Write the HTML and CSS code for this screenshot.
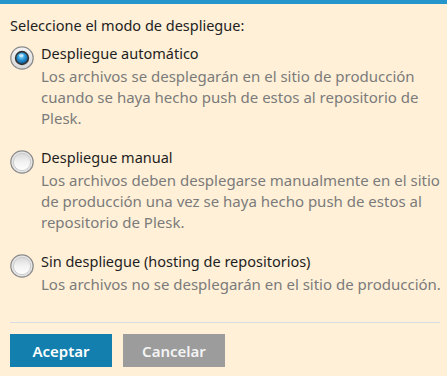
FILE: index.html
```html
<!DOCTYPE html>
<html lang="es">
<head>
<meta charset="utf-8">
<title>Modo de despliegue</title>
<link rel="stylesheet" href="styles.css">
</head>
<body>
<div class="topbar"></div>
<form class="panel">
  <div class="heading">Seleccione el modo de despliegue:</div>
  <div class="options">
    <label class="option">
      <span class="radio">
        <svg width="24" height="24" viewBox="0 0 24 24">
          <defs>
            <linearGradient id="ring" x1="0" y1="0" x2="0" y2="1">
              <stop offset="0" stop-color="#f4f4f4"/>
              <stop offset="1" stop-color="#d8d8d8"/>
            </linearGradient>
            <radialGradient id="blue" cx="0.45" cy="0.35" r="0.7">
              <stop offset="0" stop-color="#9fe0ff"/>
              <stop offset="0.45" stop-color="#2e9bdc"/>
              <stop offset="1" stop-color="#0b4f86"/>
            </radialGradient>
          </defs>
          <circle cx="12" cy="12" r="11.2" fill="url(#ring)" stroke="#8a8a8a" stroke-width="1.2"/>
          <circle cx="12" cy="12" r="7.2" fill="#333"/>
          <circle cx="12" cy="12" r="5.6" fill="url(#blue)"/>
          <ellipse cx="11.3" cy="9.6" rx="2.4" ry="1.4" fill="#d8f3ff" opacity="0.8"/>
        </svg>
      </span>
      <span class="text">
        <span class="label">Despliegue automático</span>
        <span class="desc">Los archivos se desplegarán en el sitio de producción cuando se haya hecho push de estos al repositorio de Plesk.</span>
      </span>
    </label>
    <label class="option">
      <span class="radio">
        <svg width="24" height="24" viewBox="0 0 24 24">
          <defs>
            <linearGradient id="off1" x1="0" y1="0" x2="0" y2="1">
              <stop offset="0" stop-color="#d9d9d9"/>
              <stop offset="0.5" stop-color="#f2f2f2"/>
              <stop offset="1" stop-color="#ffffff"/>
            </linearGradient>
          </defs>
          <circle cx="12" cy="12" r="11.2" fill="#e4e4e4" stroke="#8a8a8a" stroke-width="1.2"/>
          <circle cx="12" cy="12" r="8.6" fill="url(#off1)" stroke="#c4c4c4" stroke-width="0.8"/>
        </svg>
      </span>
      <span class="text">
        <span class="label">Despliegue manual</span>
        <span class="desc">Los archivos deben desplegarse manualmente en el sitio de producción una vez se haya hecho push de estos al repositorio de Plesk.</span>
      </span>
    </label>
    <label class="option">
      <span class="radio">
        <svg width="24" height="24" viewBox="0 0 24 24">
          <circle cx="12" cy="12" r="11.2" fill="#e4e4e4" stroke="#8a8a8a" stroke-width="1.2"/>
          <circle cx="12" cy="12" r="8.6" fill="url(#off1)" stroke="#c4c4c4" stroke-width="0.8"/>
        </svg>
      </span>
      <span class="text">
        <span class="label">Sin despliegue (hosting de repositorios)</span>
        <span class="desc">Los archivos no se desplegarán en el sitio de producción.</span>
      </span>
    </label>
  </div>
  <div class="actions">
    <button type="button" class="btn btn-primary">Aceptar</button>
    <button type="button" class="btn btn-secondary">Cancelar</button>
  </div>
</form>
</body>
</html>
```

FILE: styles.css
```css
html, body {
  margin: 0;
  padding: 0;
  background: #fff0d7;
}
body {
  font-family: "Noto Sans", "Open Sans", sans-serif;
  font-size: 14.5px;
  color: #222;
  width: 447px;
  height: 376px;
  overflow: hidden;
}
.topbar {
  height: 4px;
  background: #2596cb;
}
.panel {
  padding: 11px 0 0 10px;
}
.heading {
  line-height: 20px;
  margin-bottom: 8px;
}
.options {
  display: flex;
  flex-direction: column;
  gap: 18px;
}
.option {
  display: flex;
  gap: 7px;
}
.radio {
  width: 24px;
  height: 24px;
  margin-top: 3px;
  flex: none;
}
.radio svg {
  display: block;
}
.text {
  display: flex;
  flex-direction: column;
}
.label {
  line-height: 20px;
  color: #1e1e1e;
  margin-bottom: 3px;
}
.desc {
  font-size: 15px;
  line-height: 21px;
  color: #7b7b7b;
}
.actions {
  margin-top: 27px;
  margin-right: 7px;
  border-top: 1px solid #d8dce3;
  padding-top: 11px;
  display: flex;
  gap: 11px;
}
.btn {
  width: 102px;
  height: 33px;
  border: 0;
  padding: 0;
  font-family: "Noto Sans", "Open Sans", sans-serif;
  font-size: 15px;
  font-weight: 600;
  color: #fff;
}
.btn-primary {
  background: #137fae;
}
.btn-secondary {
  background: #9c9c9c;
  color: #f4f4f4;
}
```
